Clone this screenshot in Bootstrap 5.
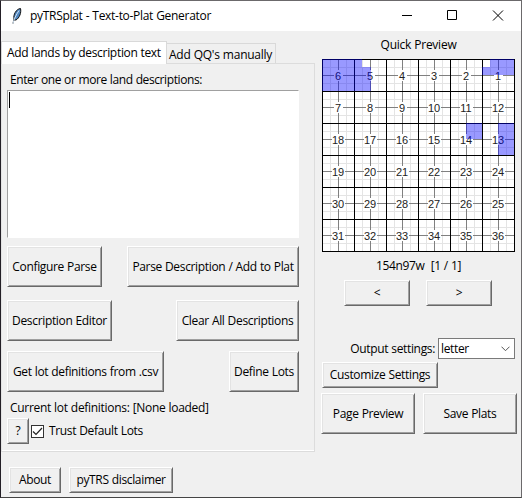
<!DOCTYPE html>
<html lang="en">
<head>
<meta charset="utf-8">
<title>pyTRSplat - Text-to-Plat Generator</title>
<link rel="stylesheet" href="https://cdn.jsdelivr.net/npm/bootstrap@5.3.0/dist/css/bootstrap.min.css">
<style>
body{width:522px;height:498px;overflow:hidden;background:#f0f0f0;color:#000;font-family:"Open Sans","Noto Sans",sans-serif;font-size:12px;line-height:16px;letter-spacing:-.34px;word-spacing:.3px;white-space:nowrap}
.app-window{height:498px;border:1px solid #6b696b;border-left-color:#231f26;border-bottom-color:#444}
.titlebar{height:30px}
.title-text{margin-left:5px;letter-spacing:-.3px}
.left-pane{width:314px}
.right-pane{width:206px;padding:6px 0 0 7px}
.tabstrip{height:32px;padding-top:10px}
.tk-tab{height:20px;margin-top:2px;width:109px;padding:3px 0 0 2px;border:1px solid #d9d9d9;border-bottom:0;border-left:0;letter-spacing:-.25px}
.tk-tab.current{height:23px;margin-top:0;width:166px;padding:3px 0 0 5px;background:#fff;border-left:1px solid #d9d9d9;position:relative;letter-spacing:-.3px;word-spacing:0}
.tab-page{height:389px;border:1px solid #dcdcdc;border-left-color:#e3e3e3;padding:8px 15px 0 5px;box-shadow:inset 0 -1px #fff}
.lbl{padding-left:3px;letter-spacing:-.3px}
.lbl-enter{height:18px;letter-spacing:-.4px}
.tk-text{height:148px;width:292px;border:1px solid #fff;border-top-color:#a0a0a0;border-left-color:#a0a0a0;padding:1px;margin-bottom:8px}
.caret{width:1px;height:16px;background:#000}
.tk-btn{--bs-btn-padding-x:0;--bs-btn-padding-y:0;display:flex;align-items:center;justify-content:center;height:26px;font:inherit;letter-spacing:inherit;word-spacing:inherit;color:#000;background:#f0f0f0;border:1px solid;border-color:#fff #696969 #696969 #fff;border-radius:0;box-shadow:inset 1px 1px #e3e3e3,inset -1px -1px #a0a0a0;flex:none}
.tk-btn.tall{height:41px}
.row-a{margin-bottom:13px}
.row-b{margin-bottom:10px}
.row-c{margin-bottom:8px}
.w22{width:22px}.w52{width:52px}.w66{width:66px}.w70{width:70px}.w94{width:94px}.w95{width:95px}.w104{width:104px}.w105{width:105px}.w116{width:116px}.w123{width:123px}.w157{width:157px}.w172{width:172px}
.tk-check{width:13px;height:13px;border:1px solid #333;background:#fff;margin:0 5px 0 2px}
.trust-row{margin-top:2px}
.foot-row{margin:15px 0 0 8px}
.preview-title{width:193px;height:22px;letter-spacing:-.25px}
.plat-label{width:193px;margin-top:6px;letter-spacing:-.35px}
.pager{margin:6px 0 0 22px;gap:16px}
.output-row{margin:32px 6px 0 0;gap:3px}
.tk-combo{width:77px;height:21px;border:1px solid #7a7a7a;background:#fff;padding:0 4px 0 2px}
.customize{margin-top:3px}
.save-row{margin:5px 0 0 -1px}
.plat-svg{font:11px "Liberation Sans",Arial,sans-serif;letter-spacing:0;text-anchor:middle;fill:#222}
svg{display:block}
</style>
</head>
<body>
<div class="app-window d-flex flex-column">
  <header class="titlebar bg-white d-flex align-items-center flex-shrink-0">
    <svg class="ms-2" width="16" height="18" viewBox="0 0 16 18"><path d="M4 16.500 5 12C4 8 7 2 11.500 1.500c1 4-1 9.500-4.500 11.500H5" fill="#4d83bd" stroke="#111"/><path d="M4 16.500C5 12 7 8 10 3.500" fill="none" stroke="#cfe2f4"/></svg>
    <span class="title-text">pyTRSplat - Text-to-Plat Generator</span>
    <svg class="ms-auto" width="120" height="30" viewBox="401 1 120 30" fill="none" stroke="#000"><path d="M402 15.500h10M447.500 10.500h9v9h-9z"/><path d="m493 10.500 10 10m0-10-10 10"/></svg>
  </header>
  <main class="d-flex">
    <section class="left-pane">
      <div class="tabstrip d-flex align-items-start">
        <div class="tk-tab current">Add lands by description text</div>
        <div class="tk-tab">Add QQ's manually</div>
      </div>
      <div class="tab-page">
        <div class="lbl lbl-enter">Enter one or more land descriptions:</div>
        <div class="tk-text bg-white"><div class="caret"></div></div>
        <div class="d-flex justify-content-between row-a"><button class="btn tk-btn tall w95">Configure Parse</button><button class="btn tk-btn tall w172">Parse Description / Add to Plat</button></div>
        <div class="d-flex justify-content-between row-b"><button class="btn tk-btn tall w105">Description Editor</button><button class="btn tk-btn tall w123">Clear All Descriptions</button></div>
        <div class="d-flex justify-content-between row-c"><button class="btn tk-btn tall w157">Get lot definitions from .csv</button><button class="btn tk-btn tall w70">Define Lots</button></div>
        <div class="lbl">Current lot definitions: [None loaded]</div>
        <div class="d-flex align-items-center trust-row"><button class="btn tk-btn w22">?</button>
          <span class="tk-check"><svg width="11" height="11" viewBox="0 0 11 11"><path d="m1 5.500 3 3L10 2" fill="none" stroke="#222" stroke-width="1.200"/></svg></span><span>Trust Default Lots</span></div>
      </div>
      <div class="d-flex gap-2 foot-row"><button class="btn tk-btn w52">About</button><button class="btn tk-btn w104">pyTRS disclaimer</button></div>
    </section>
    <section class="right-pane">
      <div class="text-center preview-title">Quick Preview</div>
      <svg class="plat-svg" id="plat" width="193" height="193"></svg>
      <div class="text-center plat-label">154n97w&nbsp; [1 / 1]</div>
      <div class="d-flex pager"><button class="btn tk-btn w66">&lt;</button><button class="btn tk-btn w66">&gt;</button></div>
      <div class="d-flex align-items-center justify-content-end output-row"><span>Output settings:</span>
        <div class="tk-combo d-flex align-items-center justify-content-between"><span>letter</span><svg width="9" height="6" viewBox="0 0 9 6"><path d="m.5.700 4 4 4-4" fill="none" stroke="#555"/></svg></div></div>
      <button class="btn tk-btn w116 customize">Customize Settings</button>
      <div class="d-flex gap-2 save-row"><button class="btn tk-btn tall w94">Page Preview</button><button class="btn tk-btn tall w94">Save Plats</button></div>
    </section>
  </main>
</div>
<script src="https://cdn.jsdelivr.net/npm/bootstrap@5.3.0/dist/js/bootstrap.bundle.min.js"></script>
<script>
// Township grid: 6 x 6 sections, numbered back and forth from the top right.
const S = 32;
const rect = (x, y, w, h, fill) => `<rect x="${x}" y="${y}" width="${w}" height="${h}" fill="${fill}"/>`;
let lines = rect(0, 0, 193, 193, '#fff'), labels = '';
for (let i = 0; i < 6; i++) {
  for (const [o, c] of [[8, '#e4e4e4'], [24, '#e4e4e4']]) lines += rect(i * S + o, 0, 1, 193, c) + rect(0, i * S + o, 193, 1, c);
}
for (let i = 0; i < 6; i++) lines += rect(i * S + 16, 0, 1, 193, '#808080') + rect(0, i * S + 16, 193, 1, '#808080');
for (let r = 0; r < 6; r++) for (let c = 0; c < 6; c++) {
  const n = r % 2 ? r * 6 + c + 1 : r * 6 + 6 - c, w = n > 9 ? 13 : 9;
  lines += rect(c * S + 16 - (w - 1) / 2, r * S + 11, w, 11, '#fff');
  labels += `<text x="${c * S + 16}" y="${r * S + 21}">${n}</text>`;
}
for (let i = 0; i < 7; i++) lines += rect(i * S, 0, 1, 193, '#000') + rect(0, i * S, 193, 1, '#000');
const lands = [[0,0,32,32],[32,0,8,32],[40,8,9,24],[168,0,24,16],[160,8,8,8],[144,64,16,16],[176,64,16,32]];
document.getElementById('plat').innerHTML = lines + labels + lands.map(a => rect(...a, 'rgba(0,0,255,.4)')).join('');
</script>
</body>
</html>
